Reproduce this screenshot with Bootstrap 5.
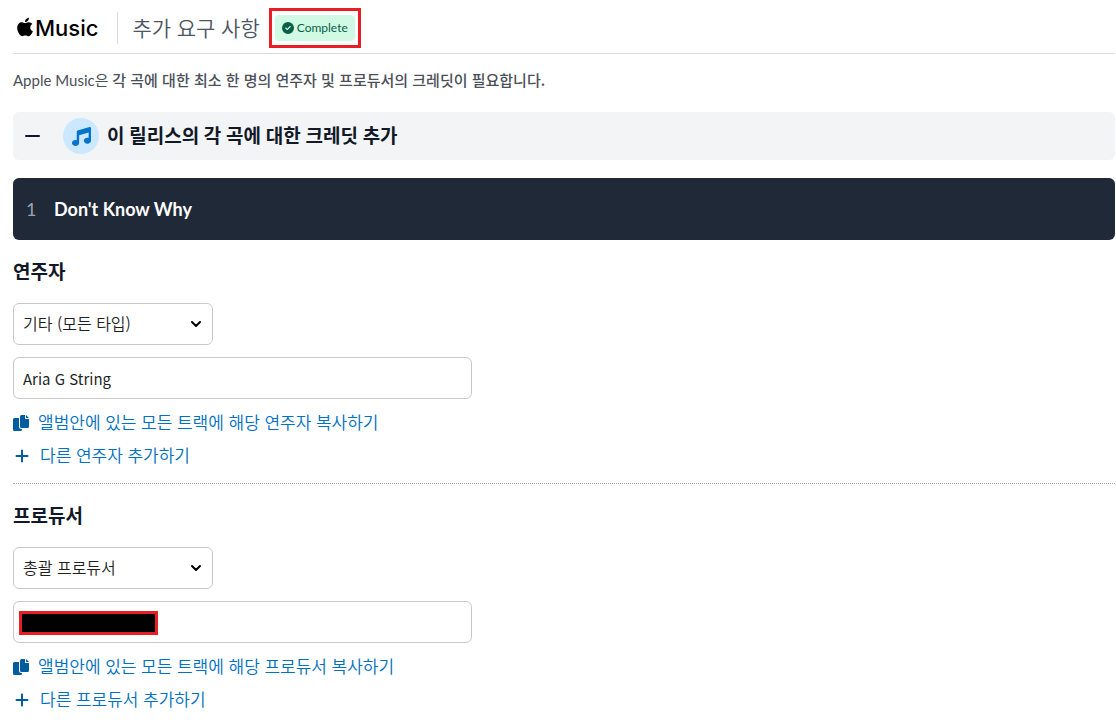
<!DOCTYPE html>
<html lang="ko">
<head>
<meta charset="utf-8">
<meta name="viewport" content="width=device-width, initial-scale=1">
<title>Apple Music 추가 요구 사항</title>
<link href="https://cdn.jsdelivr.net/npm/bootstrap@5.3.0/dist/css/bootstrap.min.css" rel="stylesheet">
<style>
  body { font-family: Lato, "Noto Sans CJK KR", sans-serif; font-size: 16px; line-height: 24px; color: #111827; background: #fff; }
  .page { padding: 0 1px 0 13px; }
  .page-head { border-bottom: 1px solid #dadbdd; height: 54px; padding-top: 2px; }
  .brand { font: 500 22px/32px Inter, sans-serif; color: #000; padding: 0 19px 0 4px; border-right: 1px solid #d9dadc; gap: 2px; }
  .page-title { font-size: 21px; line-height: 32px; font-weight: 350; color: #4b5563; margin-left: 14px; }
  .marked { border: 3px solid #e81e25; padding: 4px 3px; margin-left: 9px; }
  .status { background: #d1fae5; color: #065f46; border-radius: 4px; font-size: 12px; line-height: 26px; padding: 0 7px; gap: 3px; }
  .intro { font-size: 15px; color: #4b4f58; margin: 14px 0 20px; }
  .intro strong { font-family: "Noto Sans CJK KR", sans-serif; font-weight: 500; }
  .section-bar { background: #f3f4f6; border-radius: 6px; min-height: 48px; padding-left: 12px; }
  .fold { border: 0; background: none; padding: 0; color: #111827; }
  .note-disc { width: 36px; height: 36px; background: #cce8ff; color: #0074cc; margin: 0 8px 0 22px; }
  .section-title, .group-title { font-size: 19px; line-height: 24px; font-weight: 600; }
  .track { background: #1f2937; border-radius: 6px; min-height: 62px; margin-top: 18px; padding-left: 13px; font-size: 18px; color: #fff; }
  .track-no { color: #9ca3af; width: 28px; }
  .group-title { margin: 0 0 19px; }
  .credit { padding: 20px 0 15px; }
  .credit + .credit { border-top: 1px dotted #aaa; }
  .field.form-select, .field.form-control { font-family: "Noto Sans CJK KR", sans-serif; line-height: 24px; height: 42px; border: 1px solid #c9c9c9; border-radius: 6px; padding: 0 9px; color: #1f1f1f; background-color: #fff; }
  .field.form-select { font-size: 16px; font-weight: 350; max-width: 200px; padding-bottom: 3px; background-image: url("data:image/svg+xml,%3Csvg xmlns='http://www.w3.org/2000/svg' viewBox='0 0 12 12'%3E%3Cpath d='M2 4l4 4 4-4' fill='none' stroke='%23000' stroke-width='2' stroke-linecap='round' stroke-linejoin='round'/%3E%3C/svg%3E"); background-size: 12px; background-position: right 10px center; }
  .field.form-control { font-size: 15px; }
  .name-box { max-width: 459px; margin: 12px 0; }
  .redaction { left: 6px; top: 10px; width: 139px; height: 24px; background: #000; border: 3px solid #e81e25; }
  .actions { gap: 9px; }
  .act { color: #0070c0; font-size: 17px; font-weight: 350; line-height: 24px; text-decoration: none; gap: 9px; }
  .act-add { gap: 11px; }
  .act svg { color: #005c9e; }
</style>
</head>
<body>
<svg class="d-none" aria-hidden="true">
  <symbol id="copy" viewBox="0 0 16 16"><path fill="currentColor" d="M8.500 0H12v3.300a.7.7 0 0 0 .7.7H16v7.500a1.500 1.500 0 0 1-1.500 1.500h-6A1.500 1.500 0 0 1 7 11.500v-10A1.500 1.500 0 0 1 8.500 0zM13 0l3 3h-3zM1.500 3H6v8.500A2.500 2.500 0 0 0 8.500 14H9v.5A1.500 1.500 0 0 1 7.500 16h-6A1.500 1.500 0 0 1 0 14.500v-10A1.500 1.500 0 0 1 1.500 3z"/></symbol>
  <symbol id="plus" viewBox="0 0 16 16"><path fill="none" stroke="currentColor" stroke-width="2" stroke-linecap="round" d="M9 2.500v11M3.500 8h11"/></symbol>
</svg>
<main class="page">
  <header class="page-head d-flex align-items-center">
    <div class="brand d-flex align-items-center">
      <svg width="16" height="22" viewBox="0 60 384 440" fill="currentColor" aria-hidden="true"><path d="M318.7 268.7c-.2-36.7 16.4-64.4 50-84.8-18.8-26.9-47.2-41.7-84.7-44.6-35.5-2.8-74.3 20.7-88.5 20.7-15 0-49.4-19.7-76.4-19.7C63.3 141.2 4 184.8 4 273.5q0 39.3 14.4 81.2c12.8 36.7 59 126.7 107.2 125.2 25.2-.6 43-17.9 75.8-17.9 31.8 0 48.3 17.9 76.4 17.9 48.6-.7 90.4-82.5 102.6-119.3-65.2-30.7-61.7-90-61.7-91.9zm-56.6-164.2c27.3-32.4 24.8-61.9 24-72.5-24.1 1.4-52 16.4-67.9 34.9-17.5 19.8-27.8 44.3-25.6 71.9 26.1 2 49.9-11.4 69.5-34.3z"/></svg>
      <span>Music</span>
    </div>
    <h1 class="page-title mb-0">추가 요구 사항</h1>
    <div class="marked">
      <span class="status d-flex align-items-center">
        <svg width="12" height="12" viewBox="0 0 512 512" fill="currentColor" aria-hidden="true"><path d="M256 512A256 256 0 1 0 256 0a256 256 0 1 0 0 512zM369 209L241 337c-9.400 9.400-24.600 9.400-33.900 0l-64-64c-9.400-9.400-9.400-24.600 0-33.900s24.600-9.400 33.900 0l47 47L335 175c9.400-9.400 24.600-9.400 33.900 0s9.400 24.600 0 33.900z"/></svg>
        Complete
      </span>
    </div>
  </header>

  <p class="intro">Apple Music은 <strong>각 곡에 대한 최소 한 명의 연주자 및 프로듀서의 크레딧이 필요합니다.</strong></p>

  <div class="section-bar d-flex align-items-center">
    <button class="fold d-flex" type="button" aria-label="접기">
      <svg width="16" height="16" viewBox="0 0 16 16" fill="none" stroke="currentColor" stroke-width="2" stroke-linecap="round"><path d="M1 8h13"/></svg>
    </button>
    <span class="note-disc rounded-circle d-flex align-items-center justify-content-center">
      <svg width="19" height="19" viewBox="0 0 512 512" fill="currentColor" aria-hidden="true"><path d="M499.100 6.300c8.100 6 12.900 15.600 12.900 25.700v72V368c0 44.200-43 80-96 80s-96-35.800-96-80s43-80 96-80c11.200 0 22 1.600 32 4.600V147L192 223.800V432c0 44.200-43 80-96 80s-96-35.800-96-80s43-80 96-80c11.200 0 22 1.600 32 4.600V200 128c0-14.100 9.300-26.600 22.800-30.700l320-96c9.700-2.900 20.200-1.100 28.300 5z"/></svg>
    </span>
    <h2 class="section-title mb-0">이 릴리스의 각 곡에 대한 크레딧 추가</h2>
  </div>

  <div class="track d-flex align-items-center">
    <span class="track-no">1</span><strong>Don't Know Why</strong>
  </div>

  <section class="credit">
    <h3 class="group-title">연주자</h3>
    <select class="field form-select" aria-label="연주자 역할"><option>기타 (모든 타입)</option></select>
    <div class="name-box">
      <input class="field form-control" type="text" value="Aria G String" aria-label="연주자 이름">
    </div>
    <div class="actions d-flex flex-column align-items-start">
      <a class="act d-flex align-items-center" href="#"><svg width="16" height="16" aria-hidden="true"><use href="#copy"/></svg>앨범안에 있는 모든 트랙에 해당 연주자 복사하기</a>
      <a class="act act-add d-flex align-items-center" href="#"><svg width="16" height="16" aria-hidden="true"><use href="#plus"/></svg>다른 연주자 추가하기</a>
    </div>
  </section>

  <section class="credit">
    <h3 class="group-title">프로듀서</h3>
    <select class="field form-select" aria-label="프로듀서 역할"><option>총괄 프로듀서</option></select>
    <div class="name-box position-relative">
      <input class="field form-control" type="text" aria-label="프로듀서 이름">
      <span class="redaction position-absolute"></span>
    </div>
    <div class="actions d-flex flex-column align-items-start">
      <a class="act d-flex align-items-center" href="#"><svg width="16" height="16" aria-hidden="true"><use href="#copy"/></svg>앨범안에 있는 모든 트랙에 해당 프로듀서 복사하기</a>
      <a class="act act-add d-flex align-items-center" href="#"><svg width="16" height="16" aria-hidden="true"><use href="#plus"/></svg>다른 프로듀서 추가하기</a>
    </div>
  </section>
</main>
<script src="https://cdn.jsdelivr.net/npm/bootstrap@5.3.0/dist/js/bootstrap.bundle.min.js"></script>
</body>
</html>
